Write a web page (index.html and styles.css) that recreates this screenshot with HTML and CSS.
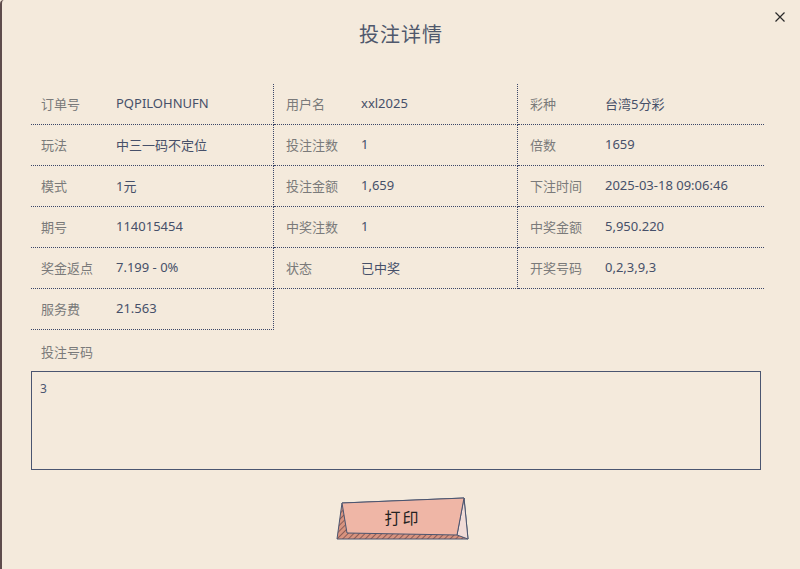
FILE: index.html
```html
<!DOCTYPE html>
<html lang="zh-CN">
	<head>
		<meta charset="UTF-8" />
		<meta name="viewport" content="width=device-width, initial-scale=1.0" />
		<title>投注详情</title>
		<link rel="stylesheet" href="styles.css">
	</head>
	<body>
		<div class="dialog">
			<button class="close" type="button" aria-label="关闭">
				<svg width="12" height="12" viewBox="0 0 12 12">
					<path d="M1.5 1.5 L10.5 10.5 M10.5 1.5 L1.5 10.5" stroke="#2a2a2a" stroke-width="1.2" fill="none" />
				</svg>
			</button>
			<header class="dialog-head">
				<h1>投注详情</h1>
			</header>
			<main class="dialog-body">
				<div class="info-grid">
					<div class="cell"><span class="label">订单号</span><span class="value">PQPILOHNUFN</span></div>
					<div class="cell"><span class="label">用户名</span><span class="value">xxl2025</span></div>
					<div class="cell"><span class="label">彩种</span><span class="value">台湾5分彩</span></div>

					<div class="cell"><span class="label">玩法</span><span class="value">中三一码不定位</span></div>
					<div class="cell"><span class="label">投注注数</span><span class="value">1</span></div>
					<div class="cell"><span class="label">倍数</span><span class="value">1659</span></div>

					<div class="cell"><span class="label">模式</span><span class="value">1元</span></div>
					<div class="cell"><span class="label">投注金额</span><span class="value">1,659</span></div>
					<div class="cell"><span class="label">下注时间</span><span class="value">2025-03-18 09:06:46</span></div>

					<div class="cell"><span class="label">期号</span><span class="value">114015454</span></div>
					<div class="cell"><span class="label">中奖注数</span><span class="value">1</span></div>
					<div class="cell"><span class="label">中奖金额</span><span class="value">5,950.220</span></div>

					<div class="cell"><span class="label">奖金返点</span><span class="value">7.199 - 0%</span></div>
					<div class="cell"><span class="label">状态</span><span class="value">已中奖</span></div>
					<div class="cell"><span class="label">开奖号码</span><span class="value">0,2,3,9,3</span></div>

					<div class="cell last"><span class="label">服务费</span><span class="value">21.563</span></div>
				</div>

				<div class="numbers-label">投注号码</div>
				<div class="numbers-box">3</div>

				<div class="actions">
					<button class="print-btn" type="button">
						<svg class="print-shape" width="136" height="46" viewBox="0 0 136 46">
							<defs>
								<pattern id="hatch" width="4" height="4" patternUnits="userSpaceOnUse" patternTransform="rotate(45)">
									<rect width="4" height="4" fill="#d8937f" />
									<line x1="0" y1="0" x2="0" y2="4" stroke="#7a4f4c" stroke-width="1.6" />
								</pattern>
							</defs>
							<polygon points="2,44 7,8 129,3 133,44" fill="url(#hatch)" stroke="#4a5570" stroke-width="1" />
							<polygon points="129,3 133,44 122,40" fill="#f1dcd7" stroke="#4a5570" stroke-width="1" />
							<polygon points="7,8 129,3 122,40 12,38" fill="#efb6a6" stroke="#4a5570" stroke-width="1" />
						</svg>
						<span class="print-text">打印</span>
					</button>
				</div>
			</main>
		</div>
	</body>
</html>
```

FILE: styles.css
```css
body {
	margin: 0;
	padding: 0;
	background: #f4eadc;
	font-family: "Noto Sans", "Noto Sans CJK SC", sans-serif;
	font-size: 13px;
}
.dialog {
	position: relative;
	min-height: 569px;
	box-sizing: border-box;
	background: #f4eadc;
	border-left: 2px solid #5e4c4c;
	border-top-left-radius: 4px;
}
.close {
	position: absolute;
	top: 11px;
	right: 14px;
	padding: 0;
	border: none;
	background: none;
	cursor: pointer;
	line-height: 0;
}
.dialog-head {
	height: 84px;
	box-sizing: border-box;
	padding-top: 21px;
	text-align: center;
}
h1 {
	margin: 0;
	font-size: 20px;
	font-weight: 400;
	color: #4f586c;
	letter-spacing: 1px;
	line-height: 28px;
}
.dialog-body {
	padding: 0 0 0 29px;
}
.info-grid {
	display: grid;
	grid-template-columns: 243px 244px 246px;
	width: 733px;
}
.cell {
	display: flex;
	align-items: center;
	height: 41px;
	box-sizing: border-box;
	padding: 0 0 2px 12px;
	border-bottom: 1px dotted #3b4668;
	border-right: 1px dotted #3b4668;
}
.cell:nth-child(3n + 1) {
	padding-left: 10px;
}
.cell:nth-child(3n) {
	border-right: none;
}
.label {
	width: 75px;
	flex-shrink: 0;
	color: #7a7a7a;
}
.value {
	color: #465069;
}
.numbers-label {
	margin-top: 13px;
	padding-left: 10px;
	color: #7a7a7a;
	line-height: 18px;
}
.numbers-box {
	margin-top: 10px;
	width: 730px;
	height: 99px;
	box-sizing: border-box;
	border: 1.5px solid #4a5570;
	padding: 8px 8px;
	font-size: 12px;
	color: #4a5570;
}
.actions {
	display: flex;
	justify-content: center;
	margin-top: 25px;
	padding-right: 26px;
}
.print-btn {
	position: relative;
	width: 136px;
	height: 46px;
	padding: 0;
	border: none;
	background: none;
	cursor: pointer;
}
.print-shape {
	position: absolute;
	left: 0;
	top: 0;
}
.print-text {
	position: relative;
	display: block;
	margin-top: -2px;
	font-family: "Noto Sans CJK SC", sans-serif;
	font-size: 16px;
	letter-spacing: 2px;
	color: #222;
}
```
